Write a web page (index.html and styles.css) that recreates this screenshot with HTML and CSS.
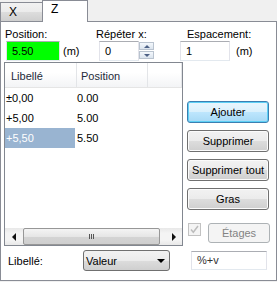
FILE: index.html
```html
<!DOCTYPE html>
<html lang="fr">
<head>
    <meta charset="UTF-8">
    <title>Niveaux</title>
    <link rel="stylesheet" href="styles.css">
</head>
<body>
    <div class="tabs">
        <div class="tab">X</div>
        <div class="tab active">Z</div>
    </div>
    <div class="panel">
        <div class="fields">
            <div class="field field-pos">
                <div class="field-label">Position:</div>
                <div class="field-row">
                    <div class="textbox textbox-pos">5.50</div>
                    <span class="unit">(m)</span>
                </div>
            </div>
            <div class="field field-rep">
                <div class="field-label">Répéter x:</div>
                <div class="field-row">
                    <div class="textbox textbox-rep">0</div>
                    <div class="spinner">
                        <div class="spin-btn"><span class="spin-up"></span></div>
                        <div class="spin-btn"><span class="spin-down"></span></div>
                    </div>
                </div>
            </div>
            <div class="field field-esp">
                <div class="field-label">Espacement:</div>
                <div class="field-row">
                    <div class="textbox textbox-esp">1</div>
                    <span class="unit unit-esp">(m)</span>
                </div>
            </div>
        </div>

        <div class="content">
            <div class="list">
                <div class="list-header">
                    <div class="col col-label">Libellé</div>
                    <div class="col col-pos">Position</div>
                    <div class="col col-rest"></div>
                </div>
                <div class="list-row">
                    <div class="cell cell-label"><span>±0,00</span></div>
                    <div class="cell cell-pos">0.00</div>
                </div>
                <div class="list-row">
                    <div class="cell cell-label"><span>+5,00</span></div>
                    <div class="cell cell-pos">5.00</div>
                </div>
                <div class="list-row selected">
                    <div class="cell cell-label"><span>+5,50</span></div>
                    <div class="cell cell-pos">5.50</div>
                </div>
                <div class="list-fill"></div>
                <div class="hscroll">
                    <div class="arrow"><span class="arrow-left"></span></div>
                    <div class="track">
                        <div class="thumb"><span class="grip"></span></div>
                    </div>
                    <div class="arrow"><span class="arrow-right"></span></div>
                </div>
            </div>

            <div class="actions">
                <div class="btn btn-default">Ajouter</div>
                <div class="btn">Supprimer</div>
                <div class="btn">Supprimer tout</div>
                <div class="btn">Gras</div>
                <div class="check-row">
                    <div class="checkbox">
                        <svg width="11" height="11" viewBox="0 0 11 11"><path d="M2 5.5 L4.3 8.2 L9 2" fill="none" stroke="#bcbcbc" stroke-width="1.5"/></svg>
                    </div>
                    <div class="btn btn-disabled">Étages</div>
                </div>
            </div>

            <div class="bottom-left">
                <span class="bottom-label">Libellé:</span>
                <div class="select">
                    <span>Valeur</span>
                    <span class="select-arrow"></span>
                </div>
            </div>
            <div class="bottom-right">
                <div class="textbox textbox-fmt">%+v</div>
            </div>
        </div>
    </div>
</body>
</html>
```

FILE: styles.css
```css
body {
    margin: 0;
    width: 277px;
    height: 282px;
    overflow: hidden;
    background-color: #f0f0f0;
    font-family: 'Liberation Sans', Arial, sans-serif;
    font-size: 11px;
    color: #000;
}
.tabs {
    display: flex;
    align-items: flex-end;
    height: 22px;
    margin-bottom: -1px;
    position: relative;
    z-index: 1;
}
.tab {
    box-sizing: border-box;
    width: 43px;
    height: 20px;
    padding-left: 8px;
    line-height: 19px;
    font-size: 12px;
    border: 1px solid #898c95;
    background: linear-gradient(#f2f2f2 0%, #ebebeb 50%, #dddddd 50%, #cfcfcf 100%);
}
.tab.active {
    width: 46px;
    height: 22px;
    margin-left: -1px;
    padding-left: 8px;
    line-height: 17px;
    border-bottom: none;
    background: #fff;
}
.panel {
    box-sizing: border-box;
    width: 277px;
    height: 260px;
    border: 1px solid #898c95;
    background-color: #fff;
}
.fields {
    display: flex;
    padding: 5px 0 0 4px;
}
.field-label {
    height: 14px;
    line-height: 14px;
}
.field-row {
    display: flex;
    align-items: center;
    height: 20px;
}
.field-pos {
    width: 91px;
}
.field-rep {
    width: 84px;
}
.field-esp .field-label {
    margin-left: 7px;
}
.textbox {
    box-sizing: border-box;
    height: 20px;
    padding-left: 5px;
    line-height: 18px;
    border: 1px solid #e2e3ea;
    border-top-color: #abadb3;
    border-bottom-color: #e3e9ef;
    background-color: #fff;
}
.textbox-pos {
    width: 54px;
    margin-left: 1px;
    background-color: #00ff00;
}
.textbox-rep {
    width: 40px;
    margin-left: 3px;
}
.textbox-esp {
    width: 50px;
}
.unit {
    margin-left: 3px;
}
.unit-esp {
    margin-left: 6px;
}
.spinner {
    display: flex;
    flex-direction: column;
    gap: 1px;
    width: 15px;
    height: 18px;
}
.spin-btn {
    box-sizing: border-box;
    display: flex;
    align-items: center;
    justify-content: center;
    height: 8px;
    border: 1px solid #b9c3cf;
    background: linear-gradient(#f4f8fc, #dbe4ee);
}
.spin-up, .spin-down {
    width: 0;
    height: 0;
    border-left: 3px solid transparent;
    border-right: 3px solid transparent;
}
.spin-up {
    border-bottom: 3px solid #4d6185;
}
.spin-down {
    border-top: 3px solid #4d6185;
}
.content {
    display: grid;
    grid-template-columns: 179px 1fr;
    column-gap: 4px;
    row-gap: 4px;
    margin: 1px 0 0 3px;
}
.list {
    box-sizing: border-box;
    height: 184px;
    display: flex;
    flex-direction: column;
    border: 1px solid #828790;
    background-color: #fff;
}
.list-header {
    display: flex;
    height: 24px;
    background: linear-gradient(#ffffff 0%, #ffffff 40%, #f3f4f6 100%);
    border-bottom: 1px solid #e5e5e5;
    color: #1e2a3a;
}
.col {
    box-sizing: border-box;
    padding-top: 3px;
    line-height: 20px;
    border-right: 1px solid #e3e5e8;
}
.col-label {
    width: 72px;
    padding-left: 6px;
}
.col-pos {
    width: 71px;
    padding-left: 4px;
}
.col-rest {
    flex: 1;
}
.list-row {
    display: flex;
    height: 20px;
    line-height: 20px;
}
.cell-label {
    width: 72px;
}
.cell-label span {
    display: inline-block;
    width: 69px;
    padding-left: 1px;
}
.list-row.selected .cell-label span {
    background-color: #99b4d1;
    color: #fff;
}
.list-fill {
    flex: 1;
}
.hscroll {
    display: flex;
    height: 17px;
    background: linear-gradient(#e8e8e8, #f4f4f4 30%, #f4f4f4 70%, #e8e8e8);
}
.arrow {
    width: 17px;
    display: flex;
    align-items: center;
    justify-content: center;
}
.arrow-left, .arrow-right {
    width: 0;
    height: 0;
    border-top: 4px solid transparent;
    border-bottom: 4px solid transparent;
}
.arrow-left {
    border-right: 4px solid #111;
}
.arrow-right {
    border-left: 4px solid #111;
}
.track {
    flex: 1;
    padding: 0 1px;
}
.thumb {
    box-sizing: border-box;
    width: 137px;
    height: 17px;
    display: flex;
    align-items: center;
    justify-content: center;
    border: 1px solid #979797;
    border-radius: 2px;
    background: linear-gradient(#f4f4f4, #e6e6e6 50%, #d4d4d4 51%, #cfcfcf);
}
.grip {
    width: 6px;
    height: 5px;
    background: repeating-linear-gradient(90deg, #555 0, #555 1px, transparent 1px, transparent 2px);
}
.actions {
    display: flex;
    flex-direction: column;
    gap: 7px;
    padding-top: 39px;
}
.btn {
    box-sizing: border-box;
    width: 82px;
    height: 22px;
    line-height: 20px;
    text-align: center;
    border: 1px solid #707070;
    border-radius: 3px;
    background: linear-gradient(#f2f2f2 0%, #ebebeb 50%, #dddddd 50%, #cfcfcf 100%);
    box-shadow: inset 0 0 0 1px #fbfbfb;
}
.btn-default {
    border-color: #3c7fb1;
    background: linear-gradient(#eaf6fd 0%, #d9f0fc 50%, #bee6fd 50%, #a7d9f5 100%);
    box-shadow: inset 0 0 0 1px #5ed0f5;
}
.check-row {
    display: flex;
    align-items: flex-start;
    margin-top: 6px;
}
.checkbox {
    box-sizing: border-box;
    width: 13px;
    height: 13px;
    margin-left: 1px;
    border: 1px solid #c2c2c2;
    background-color: #f4f4f4;
    display: flex;
    align-items: center;
    justify-content: center;
}
.btn-disabled {
    width: 62px;
    height: 20px;
    line-height: 18px;
    margin-left: 7px;
    color: #838383;
    border-color: #adb2b5;
    background: #f4f4f4;
    box-shadow: none;
}
.bottom-left {
    display: flex;
    align-items: center;
    height: 21px;
}
.bottom-label {
    width: 75px;
    margin-left: 4px;
}
.select {
    box-sizing: border-box;
    width: 87px;
    height: 21px;
    display: flex;
    align-items: center;
    justify-content: space-between;
    padding: 0 4px 0 2px;
    border: 1px solid #707070;
    border-radius: 3px;
    background: linear-gradient(#f2f2f2 0%, #ebebeb 50%, #dddddd 50%, #cfcfcf 100%);
}
.select-arrow {
    width: 0;
    height: 0;
    border-left: 4px solid transparent;
    border-right: 4px solid transparent;
    border-top: 4px solid #000;
}
.bottom-right {
    display: flex;
    align-items: center;
    height: 21px;
}
.textbox-fmt {
    width: 76px;
    height: 19px;
    line-height: 17px;
    margin-left: 4px;
    color: #333;
}
```
